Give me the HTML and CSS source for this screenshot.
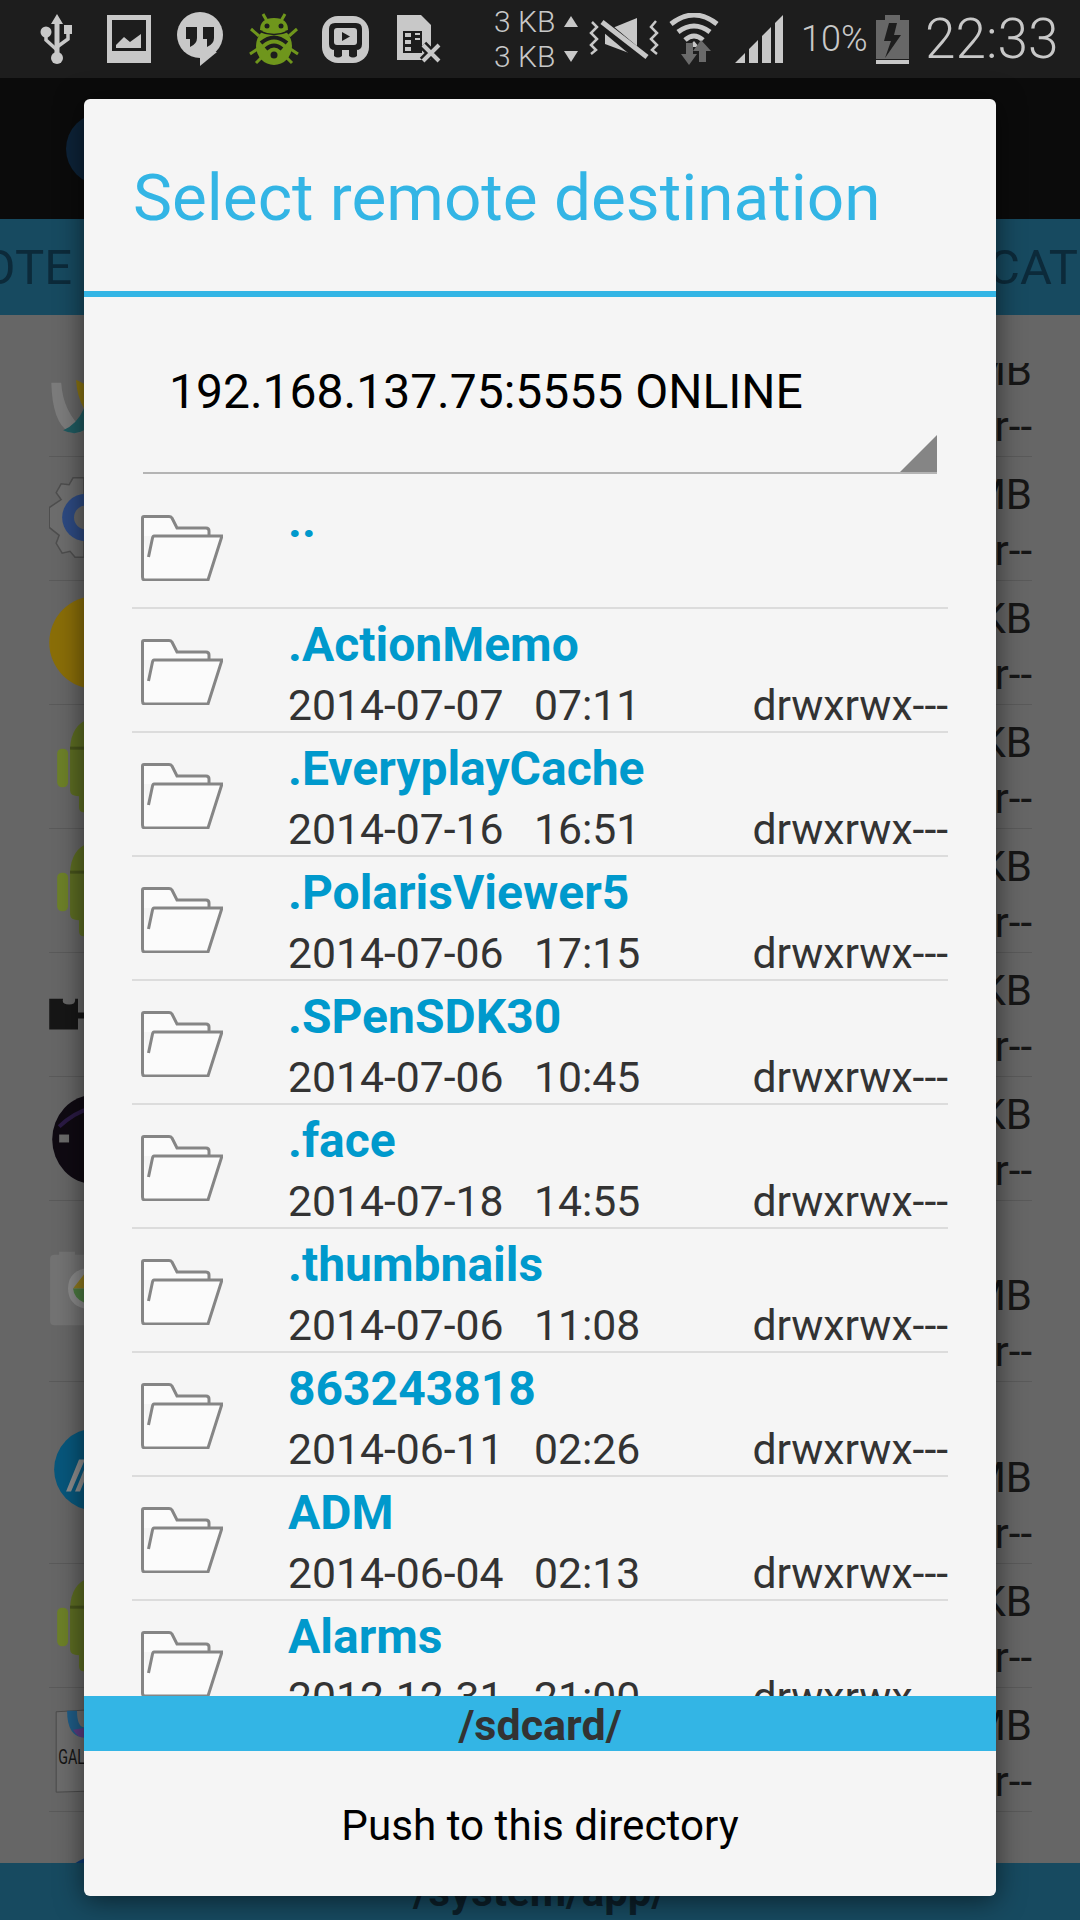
FILE: index.html
```html
<!doctype html>
<html lang="en">
<head>
  <meta charset="utf-8">
  <title>Select remote destination</title>
  <link rel="stylesheet" href="styles.css">
</head>
<body>
  <svg class="defs" width="0" height="0">
    <symbol id="folder" viewBox="0 0 82 66">
      <path d="M1.500 21 V3 Q1.500 1.500 3 1.500 H28 Q30 1.500 31 3 L36 13 H65 Q68 13 68 16 V21" fill="#fbfbfb" stroke="#858585" stroke-width="3"/>
      <path d="M1.500 20 V62 Q1.500 65 4 65 H67 L81 21 H13 Q12 21 11.500 23 L7.500 42" fill="#fbfbfb" stroke="#858585" stroke-width="3"/>
    </symbol>
    <symbol id="android" viewBox="0 0 60 124">
      <rect x="8" y="44" width="11" height="39" rx="5" fill="#6d8128"/>
      <path d="M21 44 Q22 20 40 14 L36 6 L38 5 L44 14 H60 V108 H34 Q30 108 30 102 V92 Q21 92 21 86 Z" fill="#5c6c22"/>
      <rect x="21" y="42" width="39" height="3" fill="#46521b"/>
    </symbol>
  </svg>

  <header class="status-bar">
    <svg class="st-icon st-usb" width="34" height="50" viewBox="0 0 34 50">
      <path d="M17 0 L23 10 H19.500 V44 H14.500 V10 H11 Z" fill="#c8c8c8"/>
      <circle cx="17" cy="44" r="6" fill="#c8c8c8"/>
      <circle cx="6" cy="18" r="5.500" fill="#c8c8c8"/>
      <rect x="24" y="11" width="8" height="9" fill="#c8c8c8"/>
      <path d="M6 20 V26 L17 36 M28 18 V25 L17 33" fill="none" stroke="#c8c8c8" stroke-width="3.500"/>
    </svg>
    <svg class="st-icon" width="44" height="48" viewBox="0 0 44 48">
      <path fill-rule="evenodd" d="M0 0 H44 V48 H0 Z M5 5 V36 H39 V5 Z" fill="#c8c8c8"/>
      <path d="M9 33 V30 L17 22 L23 27 L34 19 V33 Z" fill="#c8c8c8"/>
    </svg>
    <svg class="st-icon" width="46" height="54" viewBox="0 0 46 54">
      <circle cx="23" cy="23" r="23" fill="#c8c8c8"/>
      <path d="M23 40 H40 L23 54 Z" fill="#c8c8c8"/>
      <path d="M9 15 H20 V26 Q20 32 13 35 V27 H9 Z M26 15 H37 V26 Q37 32 30 35 V27 H26 Z" fill="#1d1d1d"/>
    </svg>
    <svg class="st-icon st-bug" width="50" height="52" viewBox="0 0 50 52">
      <path d="M2 16 L10 23 M48 16 L40 23 M1 41 L10 35 M49 41 L40 35 M7 50 L14 43 M43 50 L36 43 M14 1 L18 8 M36 1 L32 8" stroke="#6f961c" stroke-width="3" fill="none"/>
      <ellipse cx="25" cy="33" rx="18" ry="19" fill="#6f961c"/>
      <path d="M11 17 Q11 5 25 5 Q39 5 39 17 Q25 23 11 17 Z" fill="#6f961c"/>
      <circle cx="18" cy="13" r="2.500" fill="#1d1d1d"/>
      <circle cx="32" cy="13" r="2.500" fill="#1d1d1d"/>
      <path d="M10 18 Q25 25 40 18" stroke="#1d1d1d" stroke-width="1.500" fill="none"/>
      <path d="M12 30 Q25 19 38 30 M17 36 Q25 29 33 36" stroke="#1d1d1d" stroke-width="4" fill="none"/>
      <circle cx="25" cy="42" r="3.500" fill="#1d1d1d"/>
    </svg>
    <svg class="st-icon st-cast" width="47" height="47" viewBox="0 0 47 47">
      <rect width="47" height="47" rx="16" fill="#c8c8c8"/>
      <path d="M13 7 H34 Q40 7 40 13 V28 Q40 34 34 34 H13 Q7 34 7 28 V13 Q7 7 13 7 Z" fill="#1d1d1d"/>
      <rect x="12" y="12" width="23" height="17" rx="3" fill="#c8c8c8"/>
      <path d="M20 16 L28 20.500 L20 25 Z" fill="#1d1d1d"/>
      <path d="M12 34 H20 V40 Q16 43 12 40 Z M27 34 H35 V40 Q31 43 27 40 Z" fill="#1d1d1d"/>
    </svg>
    <svg class="st-icon st-sim" width="45" height="49" viewBox="0 0 45 49">
      <path d="M0 0 H24 L34 10 V45 H0 Z" fill="#c8c8c8"/>
      <path d="M6 16 H25 V38 H6 Z" fill="#1d1d1d"/>
      <path d="M8 18 H14 V22 H8 Z M8 25 H14 V29 H8 Z M8 32 H14 V36 H8 Z M18 18 H23 V20 H18 Z M18 23 H23 V25 H18 Z" fill="#c8c8c8"/>
      <path d="M26 30 L42 46 M42 30 L26 46" stroke="#1d1d1d" stroke-width="9"/>
      <path d="M26 30 L42 46 M42 30 L26 46" stroke="#c8c8c8" stroke-width="4"/>
    </svg>
    <div class="net-speed">
      <div class="net-line">3 KB<svg width="14" height="11" viewBox="0 0 14 11"><path d="M7 0 L14 11 H0 Z" fill="#c8c8c8"/></svg></div>
      <div class="net-line">3 KB<svg width="14" height="11" viewBox="0 0 14 11"><path d="M0 0 H14 L7 11 Z" fill="#c8c8c8"/></svg></div>
    </div>
    <svg class="st-icon st-mute" width="70" height="46" viewBox="0 0 70 46">
      <path d="M3 6 L8 11 L2 17 L8 23 L2 29 L7 34 L2 38 M67 5 L62 11 L68 17 L62 23 L68 29 L63 34 L68 38" stroke="#c8c8c8" stroke-width="2.500" fill="none"/>
      <path d="M16 15 L48 2 V40 L16 28 Z" fill="#c8c8c8"/>
      <path d="M13 8 L56 44" stroke="#1d1d1d" stroke-width="11"/>
      <path d="M13 6 L58 41" stroke="#c8c8c8" stroke-width="5"/>
    </svg>
    <svg class="st-icon st-wifi" width="50" height="52" viewBox="0 0 50 52">
      <path d="M2 11 Q25 -7 48 11 M9 19 Q25 7 41 19 M16 27 Q25 19 34 27" stroke="#c8c8c8" stroke-width="5" fill="none"/>
      <path d="M25 28 L30 34 H20 Z" fill="#c8c8c8"/>
      <path d="M17 30 H24 V41 H28 L20 52 L12 41 H17 Z" fill="#6a6a6a"/>
      <path d="M32 27 L42 38 H37 V49 H30 V38 H24 Z" fill="#6a6a6a"/>
    </svg>
    <svg class="st-icon st-signal" width="49" height="49" viewBox="0 0 49 49">
      <path d="M0 48 L10 38 V48 Z M14 34 L23 25 V48 H14 Z M27 21 L36 12 V48 H27 Z M40 8 L48 0 V48 H40 Z" fill="#c8c8c8"/>
    </svg>
    <span class="battery-pct">10%</span>
    <svg class="st-icon st-battery" width="33" height="49" viewBox="0 0 33 49">
      <path d="M9 0 H24 V5 H33 V44 H0 V5 H9 Z" fill="#676767"/>
      <rect y="45" width="33" height="4" fill="#c8c8c8"/>
      <path d="M21 8 H13 L8 26 H15 L9 43 L25 20 H18 Z" fill="#1d1d1d"/>
    </svg>
    <span class="clock">22:33</span>
  </header>

  <div class="action-bar">
    <svg width="72" height="72" viewBox="0 0 72 72"><circle cx="36" cy="36" r="36" fill="#0d2338"/></svg>
  </div>

  <nav class="tab-bar">
    <span class="tab tab-left">REMOTE</span>
    <span class="tab tab-right">LOCATION</span>
  </nav>

  <main class="app-list">
    <div class="app-row app-row-cut">
      <svg class="app-icon" viewBox="0 0 60 94">
        <path d="M2 20 Q3 60 20 70 Q30 72 35 68 Q14 50 12 20 Z" fill="#7c7c7c"/>
        <path d="M14 68 Q26 74 35 68 V46 Q28 62 14 68 Z" fill="#1f5a60"/>
        <path d="M27 17 L35 21 V46 Q28 34 27 17 Z" fill="#8a7412"/>
      </svg>
      <div class="app-meta"><span>2.31 MB</span><span>-rw-r--r--</span></div>
    </div>
    <div class="app-row">
      <svg class="app-icon" viewBox="0 0 60 124">
        <path d="M35 21 H24 L20 28 L12 27 L7 36 L12 43 L0 51 V71 L10 79 L7 87 L13 97 L21 95 L26 101 H35 Z" fill="#6d6d6d" stroke="#4e4e4e" stroke-width="1.500"/>
        <circle cx="37" cy="61" r="24" fill="#2d4a82"/>
        <circle cx="37" cy="61" r="12" fill="#666"/>
      </svg>
      <div class="app-meta"><span>1.20 MB</span><span>-rw-r--r--</span></div>
    </div>
    <div class="app-row">
      <svg class="app-icon" viewBox="0 0 60 124"><circle cx="47" cy="62" r="47" fill="#8a6e08"/></svg>
      <div class="app-meta"><span>845 KB</span><span>-rw-r--r--</span></div>
    </div>
    <div class="app-row">
      <svg class="app-icon" viewBox="0 0 60 124"><use href="#android"/></svg>
      <div class="app-meta"><span>120 KB</span><span>-rw-r--r--</span></div>
    </div>
    <div class="app-row">
      <svg class="app-icon" viewBox="0 0 60 124"><use href="#android"/></svg>
      <div class="app-meta"><span>316 KB</span><span>-rw-r--r--</span></div>
    </div>
    <div class="app-row">
      <svg class="app-icon" viewBox="0 0 60 124">
        <path d="M0 46 H14 Q12 52 20 52 Q27 52 26 46 H29 V60 H36 V66 H29 V77 H0 Z" fill="#161616"/>
      </svg>
      <div class="app-meta"><span>204 KB</span><span>-rw-r--r--</span></div>
    </div>
    <div class="app-row">
      <svg class="app-icon" viewBox="0 0 60 124">
        <ellipse cx="45" cy="63" rx="42" ry="45" fill="#0f0a12"/>
        <path d="M10 58 H20 V66 H10 Z" fill="#6a6a6a"/>
        <path d="M10 50 Q25 36 40 32" stroke="#2a1a44" stroke-width="4" fill="none"/>
      </svg>
      <div class="app-meta"><span>512 KB</span><span>-rw-r--r--</span></div>
    </div>
    <div class="app-row app-row-tall">
      <svg class="app-icon" viewBox="0 0 60 181">
        <path d="M10 51 H26 V54 H35 V125 H5 Q1 125 1 121 V58 Q1 54 5 54 H10 Z" fill="#737373"/>
        <path d="M35 68 Q19 72 19 88 Q19 104 35 108 Z" fill="#8a8a8a"/>
        <path d="M35 74 L24 88 H35 Z" fill="#8f7a1e"/>
        <path d="M24 88 Q25 98 35 102 V88 Z" fill="#4c7a40"/>
      </svg>
      <div class="app-meta"><span>7.46 MB</span><span>-rw-r--r--</span></div>
    </div>
    <div class="app-row app-row-tall2">
      <svg class="app-icon" viewBox="0 0 60 182">
        <ellipse cx="45" cy="88" rx="40" ry="41" fill="#07577c"/>
        <path d="M17 110 L30 78 H36 L22 110 Z M26 110 L36 86 V98 L31 110 Z" fill="#8d8d8d"/>
      </svg>
      <div class="app-meta"><span>3.18 MB</span><span>-rw-r--r--</span></div>
    </div>
    <div class="app-row">
      <svg class="app-icon" viewBox="0 0 60 124"><use href="#android"/></svg>
      <div class="app-meta"><span>96 KB</span><span>-rw-r--r--</span></div>
    </div>
    <div class="app-row">
      <svg class="app-icon" viewBox="0 0 60 124">
        <path d="M7 24 L40 22 V104 L7 105 Z" fill="#6c6c6c" stroke="#4a4a4a" stroke-width="1"/>
        <path d="M18 23 Q18 50 36 50 V40 Q28 40 28 23 Z" fill="#1f5c86"/>
        <path d="M24 42 Q28 50 36 50 V40 Z" fill="#5c3c80"/>
        <text x="9" y="77" class="gal-mark" textLength="27" lengthAdjust="spacingAndGlyphs">GAL</text>
      </svg>
      <div class="app-meta"><span>1.52 MB</span><span>-rw-r--r--</span></div>
    </div>
    <div class="app-row">
      <svg class="app-icon" viewBox="0 0 60 124"><circle cx="50" cy="85" r="41" fill="#0c3a72"/></svg>
    </div>
  </main>

  <footer class="path-bar">/system/app/</footer>

  <section class="dialog">
    <h1 class="dialog-title">Select remote destination</h1>
    <div class="device-spinner">
      192.168.137.75:5555 ONLINE
      <span class="spinner-corner"></span>
    </div>
    <div class="file-list">
      <div class="file-row">
        <svg class="folder"><use href="#folder"/></svg>
        <div class="file-info">
          <div class="file-name">..</div>
        </div>
      </div>
      <div class="file-row">
        <svg class="folder"><use href="#folder"/></svg>
        <div class="file-info">
          <div class="file-name">.ActionMemo</div>
          <div class="file-meta"><span class="file-date">2014-07-07</span><span>07:11</span><span class="file-perm">drwxrwx---</span></div>
        </div>
      </div>
      <div class="file-row">
        <svg class="folder"><use href="#folder"/></svg>
        <div class="file-info">
          <div class="file-name">.EveryplayCache</div>
          <div class="file-meta"><span class="file-date">2014-07-16</span><span>16:51</span><span class="file-perm">drwxrwx---</span></div>
        </div>
      </div>
      <div class="file-row">
        <svg class="folder"><use href="#folder"/></svg>
        <div class="file-info">
          <div class="file-name">.PolarisViewer5</div>
          <div class="file-meta"><span class="file-date">2014-07-06</span><span>17:15</span><span class="file-perm">drwxrwx---</span></div>
        </div>
      </div>
      <div class="file-row">
        <svg class="folder"><use href="#folder"/></svg>
        <div class="file-info">
          <div class="file-name">.SPenSDK30</div>
          <div class="file-meta"><span class="file-date">2014-07-06</span><span>10:45</span><span class="file-perm">drwxrwx---</span></div>
        </div>
      </div>
      <div class="file-row">
        <svg class="folder"><use href="#folder"/></svg>
        <div class="file-info">
          <div class="file-name">.face</div>
          <div class="file-meta"><span class="file-date">2014-07-18</span><span>14:55</span><span class="file-perm">drwxrwx---</span></div>
        </div>
      </div>
      <div class="file-row">
        <svg class="folder"><use href="#folder"/></svg>
        <div class="file-info">
          <div class="file-name">.thumbnails</div>
          <div class="file-meta"><span class="file-date">2014-07-06</span><span>11:08</span><span class="file-perm">drwxrwx---</span></div>
        </div>
      </div>
      <div class="file-row">
        <svg class="folder"><use href="#folder"/></svg>
        <div class="file-info">
          <div class="file-name">863243818</div>
          <div class="file-meta"><span class="file-date">2014-06-11</span><span>02:26</span><span class="file-perm">drwxrwx---</span></div>
        </div>
      </div>
      <div class="file-row">
        <svg class="folder"><use href="#folder"/></svg>
        <div class="file-info">
          <div class="file-name">ADM</div>
          <div class="file-meta"><span class="file-date">2014-06-04</span><span>02:13</span><span class="file-perm">drwxrwx---</span></div>
        </div>
      </div>
      <div class="file-row">
        <svg class="folder"><use href="#folder"/></svg>
        <div class="file-info">
          <div class="file-name">Alarms</div>
          <div class="file-meta"><span class="file-date">2012-12-31</span><span>21:00</span><span class="file-perm">drwxrwx---</span></div>
        </div>
      </div>
    </div>
    <div class="current-path">/sdcard/</div>
    <div class="push-button">Push to this directory</div>
  </section>
</body>
</html>
```

FILE: styles.css
```css
* { box-sizing: border-box; }

html,
body {
  margin: 0;
  padding: 0;
  width: 1080px;
  height: 1920px;
  overflow: hidden;
  font-family: Roboto, "Liberation Sans", sans-serif;
  background-color: #666;
}

body {
  position: relative;
  display: flex;
  flex-direction: column;
}

.defs {
  position: absolute;
}

/* Status bar */
.status-bar {
  flex: none;
  height: 78px;
  padding-left: 40px;
  display: flex;
  align-items: center;
  background-color: #1d1d1d;
  color: #c8c8c8;
  font-weight: 300;
}
.st-icon {
  flex: none;
  margin-right: 26px;
}
.st-usb { margin-right: 33px; }
.st-bug { margin-right: 23px; }
.st-cast { margin-right: 28px; }
.st-sim { margin-right: 52px; }
.st-mute { margin-right: 10px; }
.st-wifi { margin-right: 16px; }
.st-signal { margin-right: 17px; }
.st-battery { margin-right: 16px; }
.net-speed {
  flex: none;
  width: 84px;
  margin-right: 11px;
  font-size: 30px;
  line-height: 35px;
}
.net-line {
  display: flex;
  justify-content: space-between;
  align-items: center;
}
.battery-pct {
  flex: none;
  width: 75px;
  font-size: 36px;
}
.clock {
  flex: none;
  font-size: 55px;
}

/* App behind the dialog */
.action-bar {
  flex: none;
  height: 141px;
  padding-left: 66px;
  display: flex;
  align-items: center;
  background-color: #0b0b0b;
}
.tab-bar {
  flex: none;
  height: 96px;
  display: flex;
  justify-content: space-between;
  align-items: center;
  background-color: #174a60;
  color: #0c2a3a;
  font-size: 49px;
  white-space: nowrap;
  overflow: hidden;
}
.tab-left {
  margin-left: -119px;
}
.tab-right {
  margin-right: -80px;
}
.app-list {
  flex: 1;
  min-height: 0;
  margin-top: 48px;
  overflow: hidden;
  background-color: #666;
  color: #161616;
  font-size: 42px;
  line-height: 56px;
}
.app-row {
  height: 124px;
  margin: 0 48px 0 49px;
  display: flex;
  justify-content: space-between;
  align-items: flex-end;
  padding-bottom: 1px;
  border-bottom: 1px solid #5a5a5a;
}
.app-row-cut { height: 94px; }
.app-row-tall { height: 181px; }
.app-row-tall2 { height: 182px; }
.app-icon {
  flex: none;
  align-self: stretch;
  width: 60px;
  height: auto;
  margin-bottom: -1px;
}
.app-meta {
  display: flex;
  flex-direction: column;
  align-items: flex-end;
}
.gal-mark {
  font-size: 20px;
  fill: #141414;
}
.path-bar {
  flex: none;
  height: 57px;
  line-height: 57px;
  text-align: center;
  background-color: #174a60;
  color: #0c1f29;
  font-size: 42px;
  font-weight: 700;
}

/* Dialog */
.dialog {
  position: absolute;
  left: 84px;
  top: 99px;
  width: 912px;
  height: 1797px;
  display: flex;
  flex-direction: column;
  background-color: #f5f5f5;
  border-radius: 6px;
  box-shadow: 0 4px 28px rgba(0, 0, 0, 0.55);
  overflow: hidden;
}
.dialog-title {
  flex: none;
  height: 198px;
  margin: 0;
  padding-left: 49px;
  line-height: 198px;
  font-size: 65.7px;
  font-weight: 400;
  color: #33b5e5;
  border-bottom: 6px solid #33b5e5;
}
.device-spinner {
  flex: none;
  position: relative;
  height: 177px;
  margin: 0 59px;
  padding: 65px 0 0 26px;
  font-size: 48px;
  line-height: 60px;
  color: #000;
  border-bottom: 2px solid #b4b4b4;
}
.spinner-corner {
  position: absolute;
  right: 0;
  bottom: 0;
  width: 0;
  height: 0;
  border-style: solid;
  border-width: 0 0 37px 37px;
  border-color: transparent transparent #858585 transparent;
}
.file-list {
  flex: 1;
  min-height: 0;
  padding: 11px 48px 0;
  overflow: hidden;
}
.file-row {
  height: 124px;
  padding-left: 9px;
  display: flex;
  border-bottom: 2px solid #dcdcdc;
}
.folder {
  flex: none;
  width: 82px;
  height: 66px;
  margin-top: 30px;
  margin-right: 65px;
}
.file-info {
  flex: 1;
  padding-top: 8px;
}
.file-name {
  font-size: 48px;
  line-height: 56px;
  font-weight: 700;
  color: #0099cc;
}
.file-meta {
  display: flex;
  margin-top: 5px;
  font-size: 42.7px;
  line-height: 54px;
  color: #333;
}
.file-date {
  width: 246px;
}
.file-perm {
  margin-left: auto;
}
.current-path {
  flex: none;
  height: 55px;
  line-height: 59px;
  text-align: center;
  font-size: 43px;
  font-weight: 700;
  color: #333;
  background-color: #33b5e5;
}
.push-button {
  flex: none;
  height: 145px;
  line-height: 149px;
  text-align: center;
  font-size: 42.2px;
  color: #000;
}
```
